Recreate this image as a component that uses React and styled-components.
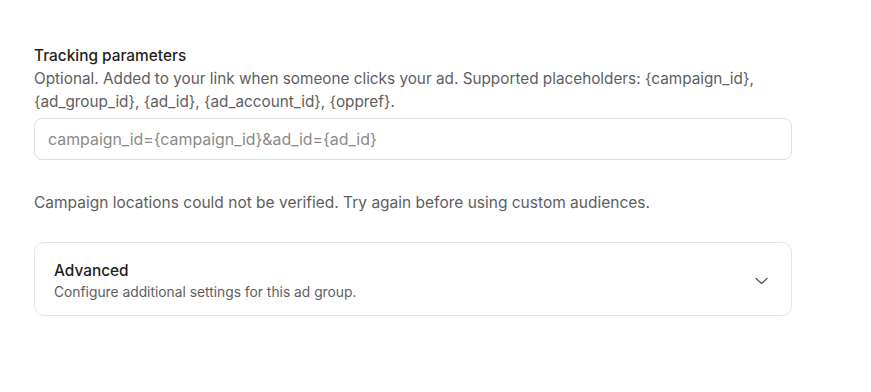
import styled, { createGlobalStyle } from "styled-components";

const GlobalStyle = createGlobalStyle`
  body {
    margin: 0;
    background: #ffffff;
    font-family: Inter, "Noto Sans", sans-serif;
    color: #1f1f1f;
  }
`;

const Page = styled.div`
  width: 758px;
  padding: 45px 0 0 34px;
  display: flex;
  flex-direction: column;
`;

const Field = styled.div`
  display: flex;
  flex-direction: column;
`;

const Label = styled.div`
  font-size: 15.4px;
  font-weight: 500;
  line-height: 21px;
  color: #1f1f1f;
`;

const Help = styled.p`
  margin: 1px 0 5px;
  font-size: 15.3px;
  line-height: 23px;
  color: #5e5e5e;
`;

const Input = styled.input`
  box-sizing: border-box;
  width: 100%;
  height: 42px;
  padding: 0 13px;
  border: 1px solid #dedede;
  border-radius: 8px;
  font-family: inherit;
  font-size: 15.9px;
  color: #1f1f1f;
  outline: none;
  &::placeholder {
    color: #8a8a8a;
  }
`;

const Notice = styled.p`
  margin: 32px 0 0;
  font-size: 15.5px;
  line-height: 22px;
  color: #5e5e5e;
`;

const Card = styled.button`
  box-sizing: border-box;
  margin-top: 28px;
  width: 100%;
  height: 74px;
  padding: 3px 23px 0 19px;
  display: flex;
  align-items: center;
  justify-content: space-between;
  background: #fff;
  border: 1px solid #e6e6e6;
  border-radius: 10px;
  font-family: inherit;
  text-align: left;
  cursor: pointer;
`;

const CardText = styled.div`
  display: flex;
  flex-direction: column;
  gap: 3px;
`;

const CardTitle = styled.span`
  font-size: 15.4px;
  font-weight: 500;
  line-height: 20px;
  color: #1f1f1f;
`;

const CardSub = styled.span`
  font-size: 13.8px;
  line-height: 17px;
  color: #5e5e5e;
`;

const Chevron = () => (
  <svg width="13" height="8" viewBox="0 0 13 8" fill="none" stroke="#5a5a5a" strokeWidth="1.3" strokeLinecap="round" strokeLinejoin="round">
    <path d="M1 1.5l5.5 5 5.5-5" />
  </svg>
);

export default function App() {
  return (
    <>
      <GlobalStyle />
      <Page>
        <Field>
          <Label>Tracking parameters</Label>
          <Help>
            Optional. Added to your link when someone clicks your ad. Supported placeholders: {"{campaign_id}"},
            {" {ad_group_id}, {ad_id}, {ad_account_id}, {oppref}."}
          </Help>
          <Input placeholder="campaign_id={campaign_id}&ad_id={ad_id}" />
        </Field>
        <Notice>Campaign locations could not be verified. Try again before using custom audiences.</Notice>
        <Card type="button">
          <CardText>
            <CardTitle>Advanced</CardTitle>
            <CardSub>Configure additional settings for this ad group.</CardSub>
          </CardText>
          <Chevron />
        </Card>
      </Page>
    </>
  );
}
